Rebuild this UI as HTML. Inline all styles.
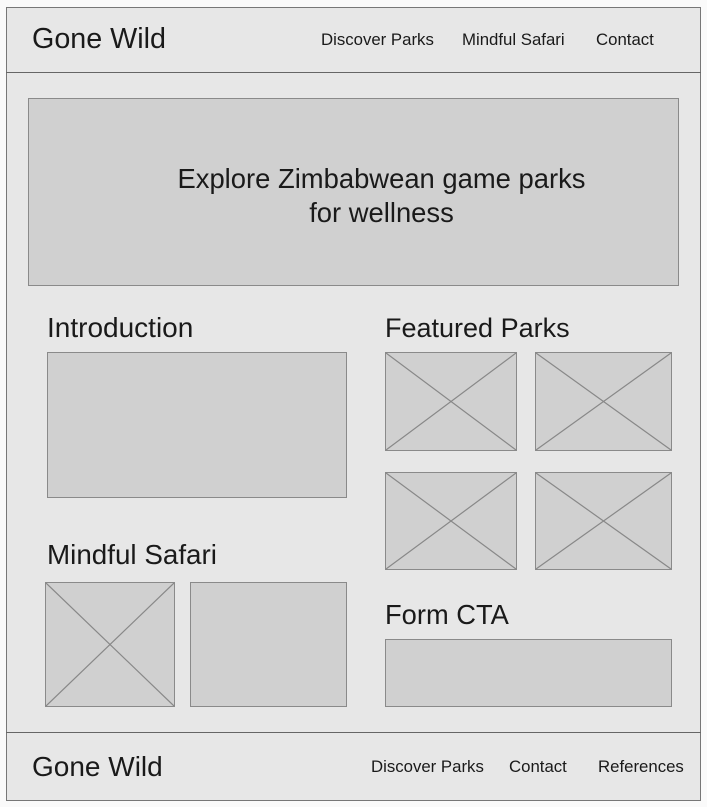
<!DOCTYPE html>
<html><head><meta charset="utf-8"><style>
*{margin:0;padding:0;box-sizing:border-box}
body{width:707px;height:807px;background:#fafafa;position:relative;font-family:"Liberation Sans",Arial,sans-serif;color:#1a1a1a;overflow:hidden}
.frame{position:absolute;left:6px;top:7px;width:695px;height:794px;background:#e7e7e7;border:1.5px solid #777}
.hl{position:absolute;left:6px;width:695px;height:0;border-top:1.5px solid #666}
.b{position:absolute;background:#d0d0d0;border:1.5px solid #8a8a8a}
.b svg{position:absolute;left:0;top:0;width:100%;height:100%}
.t{position:absolute;white-space:nowrap;line-height:1}
.nav{font-size:16.8px}
.h{font-size:27px}
</style></head><body>
<div class="frame"></div>
<div class="hl" style="top:72px"></div>
<div class="hl" style="top:732px"></div>

<div class="t" style="left:32px;top:25px;font-size:28.7px">Gone Wild</div>
<div class="t nav" style="left:321px;top:32px">Discover Parks</div>
<div class="t nav" style="left:462px;top:32px">Mindful Safari</div>
<div class="t nav" style="left:596px;top:32px">Contact</div>

<div class="b" style="left:28px;top:98px;width:651px;height:188px"></div>
<div class="t" style="left:28px;width:707px;top:162px;font-size:27.4px;text-align:center;line-height:34px;white-space:normal">Explore Zimbabwean game parks<br>for wellness</div>

<div class="t" style="left:47px;top:314px;font-size:28px">Introduction</div>
<div class="b" style="left:47px;top:352px;width:300px;height:146px"></div>

<div class="t" style="left:385px;top:315px;font-size:27px">Featured Parks</div>
<div class="b" style="left:385px;top:352px;width:132px;height:99px"><svg viewBox="0 0 100 100" preserveAspectRatio="none"><path d="M0 0L100 100M100 0L0 100" stroke="#888" stroke-width="1.2" vector-effect="non-scaling-stroke"/></svg></div>
<div class="b" style="left:535px;top:352px;width:137px;height:99px"><svg viewBox="0 0 100 100" preserveAspectRatio="none"><path d="M0 0L100 100M100 0L0 100" stroke="#888" stroke-width="1.2" vector-effect="non-scaling-stroke"/></svg></div>
<div class="b" style="left:385px;top:472px;width:132px;height:98px"><svg viewBox="0 0 100 100" preserveAspectRatio="none"><path d="M0 0L100 100M100 0L0 100" stroke="#888" stroke-width="1.2" vector-effect="non-scaling-stroke"/></svg></div>
<div class="b" style="left:535px;top:472px;width:137px;height:98px"><svg viewBox="0 0 100 100" preserveAspectRatio="none"><path d="M0 0L100 100M100 0L0 100" stroke="#888" stroke-width="1.2" vector-effect="non-scaling-stroke"/></svg></div>

<div class="t" style="left:47px;top:541px;font-size:27.8px">Mindful Safari</div>
<div class="b" style="left:45px;top:582px;width:130px;height:125px"><svg viewBox="0 0 100 100" preserveAspectRatio="none"><path d="M0 0L100 100M100 0L0 100" stroke="#888" stroke-width="1.2" vector-effect="non-scaling-stroke"/></svg></div>
<div class="b" style="left:190px;top:582px;width:157px;height:125px"></div>

<div class="t" style="left:385px;top:601px;font-size:27.3px">Form CTA</div>
<div class="b" style="left:385px;top:639px;width:287px;height:68px"></div>

<div class="t" style="left:32px;top:753px;font-size:28px">Gone Wild</div>
<div class="t nav" style="left:371px;top:759px">Discover Parks</div>
<div class="t nav" style="left:509px;top:759px">Contact</div>
<div class="t nav" style="left:598px;top:759px">References</div>
</body></html>
